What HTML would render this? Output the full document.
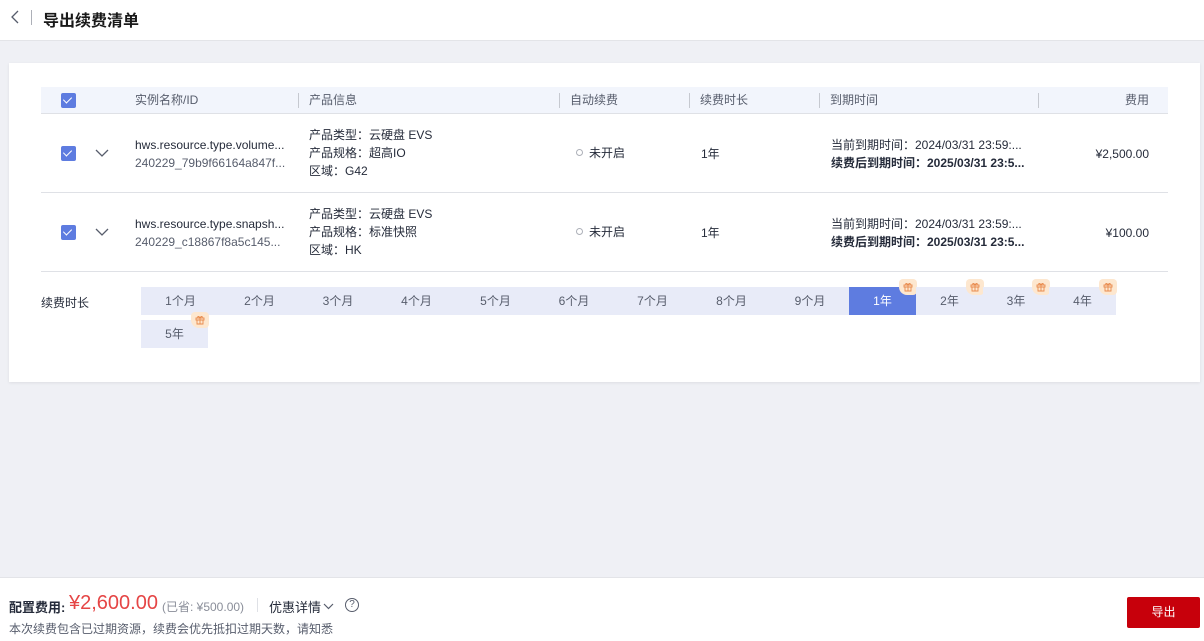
<!DOCTYPE html>
<html><head><meta charset="utf-8"><style>
*{box-sizing:border-box;margin:0;padding:0}
body{width:1204px;height:641px;background:#eff0f5;font-family:"Liberation Sans","Noto Sans CJK SC",sans-serif;font-size:12px;color:#252b3a;position:relative;overflow:hidden}
.hdr{position:absolute;left:0;top:0;width:1204px;height:41px;background:#fff;border-bottom:1px solid #e3e4e8}
.hdr .t{position:absolute;left:43px;top:7px;font-size:16px;font-weight:bold;color:#191919}
.card{position:absolute;left:9px;top:63px;width:1191px;height:319px;background:#fff;box-shadow:0 1px 3px rgba(0,0,0,.08)}
.abs{position:absolute;white-space:nowrap}
.cb{position:absolute;width:15px;height:15px;background:#5e7ce0;border-radius:2px}
.cb:after{content:"";position:absolute;left:4px;top:2px;width:4px;height:7px;border:solid #fff;border-width:0 1.5px 1.5px 0;transform:rotate(45deg)}
.th{position:absolute;left:32px;top:24px;width:1127px;height:27px;background:#f2f5fc;border-bottom:1px solid #dfe1e6}
.th span{position:absolute;top:4px;color:#575d6c}
.sep{position:absolute;top:6px;width:1px;height:15px;background:#c6c9d0}
.row{position:absolute;left:32px;width:1127px;height:79px;border-bottom:1px solid #dfe1e6;line-height:18px}
.gray{color:#575d6c}
.dot{display:inline-block;width:7px;height:7px;border:1.5px solid #adb0b8;border-radius:50%;margin-right:6px;vertical-align:1px}
.dur{position:absolute;height:28px;background:#e8ebf8;text-align:center;line-height:28px;color:#575d6c}
.dur.on{background:#5e7ce0;color:#fff}
.gift{position:absolute;right:-1px;top:-8px;width:18px;height:16px;background:#fde7cf;border-radius:4px 4px 4px 8px}
.gift svg{position:absolute;left:4px;top:3px}
.ftr{position:absolute;left:0;top:577px;width:1204px;height:64px;background:#fff;border-top:1px solid #e3e4e8}
</style></head><body>
<div class="hdr">
<svg class="abs" style="left:10px;top:10px" width="12" height="14"><path d="M8 1L2 7l6 6" fill="none" stroke="#575d6c" stroke-width="1.3"/></svg>
<div class="abs" style="left:31px;top:10px;width:1px;height:15px;background:#adb0b8"></div>
<div class="t">导出续费清单</div>
</div>
<div class="card">
<div class="th">
<div class="cb" style="left:20px;top:6px"></div>
<span style="left:94px">实例名称/ID</span>
<div class="sep" style="left:257px"></div><span style="left:268px">产品信息</span>
<div class="sep" style="left:518px"></div><span style="left:529px">自动续费</span>
<div class="sep" style="left:648px"></div><span style="left:659px">续费时长</span>
<div class="sep" style="left:778px"></div><span style="left:789px">到期时间</span>
<div class="sep" style="left:997px"></div><span style="right:19px">费用</span>
</div>
<div class="row" style="top:51px">
<div class="cb" style="left:20px;top:32px"></div>
<svg class="abs" style="left:54px;top:35px" width="14" height="9"><path d="M1 1l6 6 6-6" fill="none" stroke="#575d6c" stroke-width="1.3"/></svg>
<div class="abs" style="left:94px;top:22px">hws.resource.type.volume...<br><span class="gray">240229_79b9f66164a847f...</span></div>
<div class="abs" style="left:268px;top:12px">产品类型：云硬盘 EVS<br>产品规格：超高IO<br>区域：G42</div>
<div class="abs" style="left:535px;top:30px"><span class="dot"></span>未开启</div>
<div class="abs" style="left:660px;top:31px">1年</div>
<div class="abs" style="left:790px;top:22px">当前到期时间：2024/03/31 23:59:...<br><b>续费后到期时间：2025/03/31 23:5...</b></div>
<div class="abs" style="right:19px;top:31px">¥2,500.00</div>
</div>
<div class="row" style="top:130px">
<div class="cb" style="left:20px;top:32px"></div>
<svg class="abs" style="left:54px;top:35px" width="14" height="9"><path d="M1 1l6 6 6-6" fill="none" stroke="#575d6c" stroke-width="1.3"/></svg>
<div class="abs" style="left:94px;top:22px">hws.resource.type.snapsh...<br><span class="gray">240229_c18867f8a5c145...</span></div>
<div class="abs" style="left:268px;top:12px">产品类型：云硬盘 EVS<br>产品规格：标准快照<br>区域：HK</div>
<div class="abs" style="left:535px;top:30px"><span class="dot"></span>未开启</div>
<div class="abs" style="left:660px;top:31px">1年</div>
<div class="abs" style="left:790px;top:22px">当前到期时间：2024/03/31 23:59:...<br><b>续费后到期时间：2025/03/31 23:5...</b></div>
<div class="abs" style="right:19px;top:31px">¥100.00</div>
</div>
<div class="abs" style="left:32px;top:231px">续费时长</div>
<div class="dur" style="left:132px;top:224px;width:79px">1个月</div>
<div class="dur" style="left:211px;top:224px;width:79px">2个月</div>
<div class="dur" style="left:290px;top:224px;width:78px">3个月</div>
<div class="dur" style="left:368px;top:224px;width:79px">4个月</div>
<div class="dur" style="left:447px;top:224px;width:79px">5个月</div>
<div class="dur" style="left:526px;top:224px;width:78px">6个月</div>
<div class="dur" style="left:604px;top:224px;width:79px">7个月</div>
<div class="dur" style="left:683px;top:224px;width:79px">8个月</div>
<div class="dur" style="left:762px;top:224px;width:78px">9个月</div>
<div class="dur on" style="left:840px;top:224px;width:67px">1年<i class="gift"><svg width="10" height="10"><path d="M1 3h8v2H1zM2 5h6v4H2zM5 3v6M5 3C4 1 2 1 3 3M5 3C6 1 8 1 7 3" fill="none" stroke="#e88a4c" stroke-width="0.9"/></svg></i></div>
<div class="dur" style="left:907px;top:224px;width:67px">2年<i class="gift"><svg width="10" height="10"><path d="M1 3h8v2H1zM2 5h6v4H2zM5 3v6M5 3C4 1 2 1 3 3M5 3C6 1 8 1 7 3" fill="none" stroke="#e88a4c" stroke-width="0.9"/></svg></i></div>
<div class="dur" style="left:974px;top:224px;width:66px">3年<i class="gift"><svg width="10" height="10"><path d="M1 3h8v2H1zM2 5h6v4H2zM5 3v6M5 3C4 1 2 1 3 3M5 3C6 1 8 1 7 3" fill="none" stroke="#e88a4c" stroke-width="0.9"/></svg></i></div>
<div class="dur" style="left:1040px;top:224px;width:67px">4年<i class="gift"><svg width="10" height="10"><path d="M1 3h8v2H1zM2 5h6v4H2zM5 3v6M5 3C4 1 2 1 3 3M5 3C6 1 8 1 7 3" fill="none" stroke="#e88a4c" stroke-width="0.9"/></svg></i></div>
<div class="dur" style="left:132px;top:257px;width:67px">5年<i class="gift"><svg width="10" height="10"><path d="M1 3h8v2H1zM2 5h6v4H2zM5 3v6M5 3C4 1 2 1 3 3M5 3C6 1 8 1 7 3" fill="none" stroke="#e88a4c" stroke-width="0.9"/></svg></i></div>
</div>
<div class="ftr">
<div class="abs" style="left:9px;top:19px;font-weight:bold;font-size:13px">配置费用:</div>
<div class="abs" style="left:69px;top:14px;font-size:20px;color:#e54545">¥2,600.00</div>
<div class="abs" style="left:162px;top:20px;color:#8a8e99">(已省: ¥500.00)</div>
<div class="abs" style="left:257px;top:20px;width:1px;height:14px;background:#dfe1e6"></div>
<div class="abs" style="left:269px;top:19px;font-size:13px">优惠详情</div>
<svg class="abs" style="left:323px;top:25px" width="11" height="7"><path d="M1 1l4.5 4.5L10 1" fill="none" stroke="#575d6c" stroke-width="1.2"/></svg>
<div class="abs" style="left:345px;top:20px;width:14px;height:14px;border:1px solid #575d6c;border-radius:50%;font-size:10px;line-height:12px;text-align:center;color:#575d6c">?</div>
<div class="abs" style="left:9px;top:42px;color:#575d6c">本次续费包含已过期资源，续费会优先抵扣过期天数，请知悉</div>
<div class="abs" style="left:1127px;top:19px;width:73px;height:31px;background:#c7000b;color:#fff;text-align:center;line-height:31px;border-radius:2px">导出</div>
</div>
</body></html>
